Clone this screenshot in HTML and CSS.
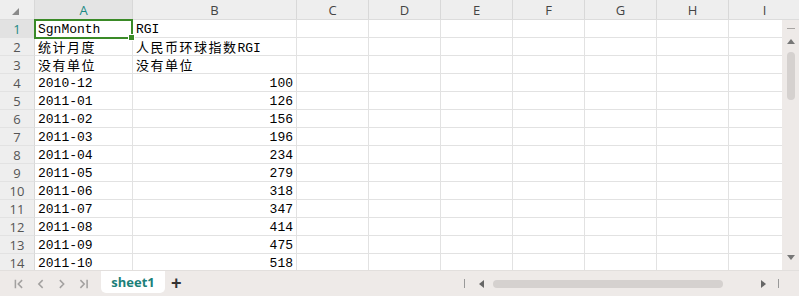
FILE: index.html
```html
<!DOCTYPE html>
<html>
<head>
<meta charset="utf-8">
<link rel="stylesheet" href="styles.css">
</head>
<body>
<div class="app">
  <div class="colhdr">
    <div class="corner"><span class="tri"></span></div>
    <div class="ch wA active">A</div>
    <div class="ch wB">B</div>
    <div class="ch">C</div>
    <div class="ch">D</div>
    <div class="ch">E</div>
    <div class="ch">F</div>
    <div class="ch">G</div>
    <div class="ch">H</div>
    <div class="ch">I</div>
  </div>
  <div class="body">
    <div class="rows" id="rows"></div>
    <div class="vscroll">
      <span class="vmin"></span>
      <span class="vup"></span>
      <span class="vthumb"></span>
      <span class="vspacer"></span>
      <span class="vdown"></span>
    </div>
    <div class="sel"><span class="handle"></span></div>
  </div>
  <div class="bottom">
    <div class="nav">
      <svg width="12" height="12" viewBox="0 0 12 12"><path d="M2.5 1.5v9M9.5 2 5.5 6l4 4" fill="none" stroke="#a3a1a0" stroke-width="1.6"/></svg>
      <svg width="12" height="12" viewBox="0 0 12 12"><path d="M8 2 4 6l4 4" fill="none" stroke="#a3a1a0" stroke-width="1.6"/></svg>
      <svg width="12" height="12" viewBox="0 0 12 12"><path d="M4 2l4 4-4 4" fill="none" stroke="#a3a1a0" stroke-width="1.6"/></svg>
      <svg width="12" height="12" viewBox="0 0 12 12"><path d="M2.5 2l4 4-4 4M9.5 1.5v9" fill="none" stroke="#a3a1a0" stroke-width="1.6"/></svg>
    </div>
    <div class="tab">sheet1</div>
    <div class="plus">+</div>
    <div class="hscroll">
      <span class="bar"></span>
      <span class="larr"></span>
      <span class="hthumb"></span>
      <span class="rarr"></span>
      <span class="bar"></span>
    </div>
  </div>
</div>
<script src="app.js"></script>
</body>
</html>
```
FILE: app.js
```js
const data = [
  ["SgnMonth", "RGI"],
  ["<span class='cjk'>统计月度</span>", "<span class='cjk'>人民币环球指数</span>RGI"],
  ["<span class='cjk'>没有单位</span>", "<span class='cjk'>没有单位</span>"],
  ["2010-12", 100], ["2011-01", 126], ["2011-02", 156], ["2011-03", 196],
  ["2011-04", 234], ["2011-05", 279], ["2011-06", 318], ["2011-07", 347],
  ["2011-08", 414], ["2011-09", 475], ["2011-10", 518]
];
const rows = document.getElementById('rows');
data.forEach((r, i) => {
  const row = document.createElement('div');
  row.className = 'row';
  let html = `<div class="rh${i === 0 ? ' active' : ''}">${i + 1}</div>`;
  html += `<div class="c wA">${r[0]}</div>`;
  const num = typeof r[1] === 'number';
  html += `<div class="c wB${num ? ' num' : ''}">${r[1]}</div>`;
  for (let k = 0; k < 7; k++) html += '<div class="c"></div>';
  row.innerHTML = html;
  rows.appendChild(row);
});
```
FILE: styles.css
```css
html, body { margin: 0; padding: 0; }
body { width: 799px; height: 296px; overflow: hidden; background: #fff; }
.app { width: 799px; height: 296px; display: flex; flex-direction: column; overflow: hidden; font-family: "Open Sans", "Liberation Sans", sans-serif; }

.colhdr { display: flex; height: 20px; background: #eeeeee; border-bottom: 1px solid #dcdcdc; box-sizing: border-box; flex: none; }
.corner { width: 35px; flex: none; border-right: 1px solid #d8d8d8; box-sizing: border-box; position: relative; }
.tri { position: absolute; left: 12px; top: 8px; width: 0; height: 0; border-left: 7px solid transparent; border-bottom: 7px solid #8a8a8a; }
.ch { width: 72px; flex: none; box-sizing: border-box; border-right: 1px solid #d8d8d8; text-align: center; font-size: 13px; line-height: 20px; color: #444; }
.ch.wA { width: 98px; }
.ch.wB { width: 164px; }
.ch.active { color: #1c8a84; background: #e4e4e4; }

.body { flex: 1; display: flex; min-height: 0; position: relative; }
.rows { width: 782px; flex: none; overflow: hidden; }
.row { display: flex; height: 18px; }
.rh { width: 35px; height: 18px; flex: none; box-sizing: border-box; background: #eeeeee; border-right: 1px solid #d8d8d8; border-bottom: 1px solid #e2e2e2; text-align: center; font-size: 13px; padding-top: 1px; line-height: 17px; color: #555; overflow: hidden; }
.rh.active { background: #e2e2e2; color: #1c8a84; }
.c { width: 72px; height: 18px; flex: none; box-sizing: border-box; border-right: 1px solid #e2e2e2; border-bottom: 1px solid #e2e2e2; font-family: "Liberation Mono", "Noto Sans CJK SC", monospace; font-size: 13px; padding-top: 2px; line-height: 16px; padding-left: 3px; color: #000; white-space: nowrap; overflow: hidden; }
.c.wA { width: 98px; }
.c.wB { width: 164px; }
.c.num { text-align: right; padding-right: 3px; }
.cjk { font-family: "Noto Sans CJK SC", sans-serif; font-size: 13px; letter-spacing: 1.5px; line-height: 14px; }

.sel { position: absolute; left: 34px; top: -1px; width: 99px; height: 20px; box-sizing: border-box; border: 2px solid #3a8a27; z-index: 5; pointer-events: none; }
.handle { position: absolute; right: -4px; bottom: -4px; width: 5px; height: 5px; background: #3a8a27; border: 1px solid #fff; }

.vscroll { width: 17px; flex: none; background: #eeeae8; display: flex; flex-direction: column; align-items: center; }
.vmin { width: 8px; height: 1px; background: #a8a5a3; margin-top: 8px; }
.vup { width: 0; height: 0; border-left: 4px solid transparent; border-right: 4px solid transparent; border-bottom: 5px solid #777; margin-top: 10px; }
.vthumb { width: 8px; height: 48px; border-radius: 4px; background: #d5d1cf; margin-top: 8px; }
.vspacer { flex: 1; }
.vdown { width: 0; height: 0; border-left: 4px solid transparent; border-right: 4px solid transparent; border-top: 5px solid #777; margin-bottom: 10px; }

.bottom { height: 26px; flex: none; background: #eeeae8; display: flex; align-items: flex-start; border-top: 1px solid #e2dfdd; box-sizing: border-box; }
.nav { display: flex; gap: 10px; padding: 7px 0 0 13px; width: 89px; flex: none; box-sizing: border-box; }
.tab { margin-left: 12px; width: 64px; height: 22px; background: #fff; border-radius: 0 0 5px 5px; text-align: center; font-family: "Open Sans", "Liberation Sans", sans-serif; font-weight: 700; font-size: 13px; line-height: 22px; color: #1b8079; flex: none; }
.plus { margin-left: 6px; font-family: "Liberation Sans", sans-serif; font-weight: 700; font-size: 18px; line-height: 24px; color: #333; flex: none; }
.hscroll { margin-left: 282px; display: flex; align-items: center; height: 25px; }
.bar { width: 1px; height: 9px; background: #999; }
.larr { width: 0; height: 0; border-top: 4px solid transparent; border-bottom: 4px solid transparent; border-right: 5px solid #666; margin-left: 14px; }
.hthumb { width: 230px; height: 8px; border-radius: 4px; background: #d5d1cf; margin-left: 9px; }
.rarr { width: 0; height: 0; border-top: 4px solid transparent; border-bottom: 4px solid transparent; border-left: 5px solid #666; margin-left: 38px; margin-right: 12px; }
```
